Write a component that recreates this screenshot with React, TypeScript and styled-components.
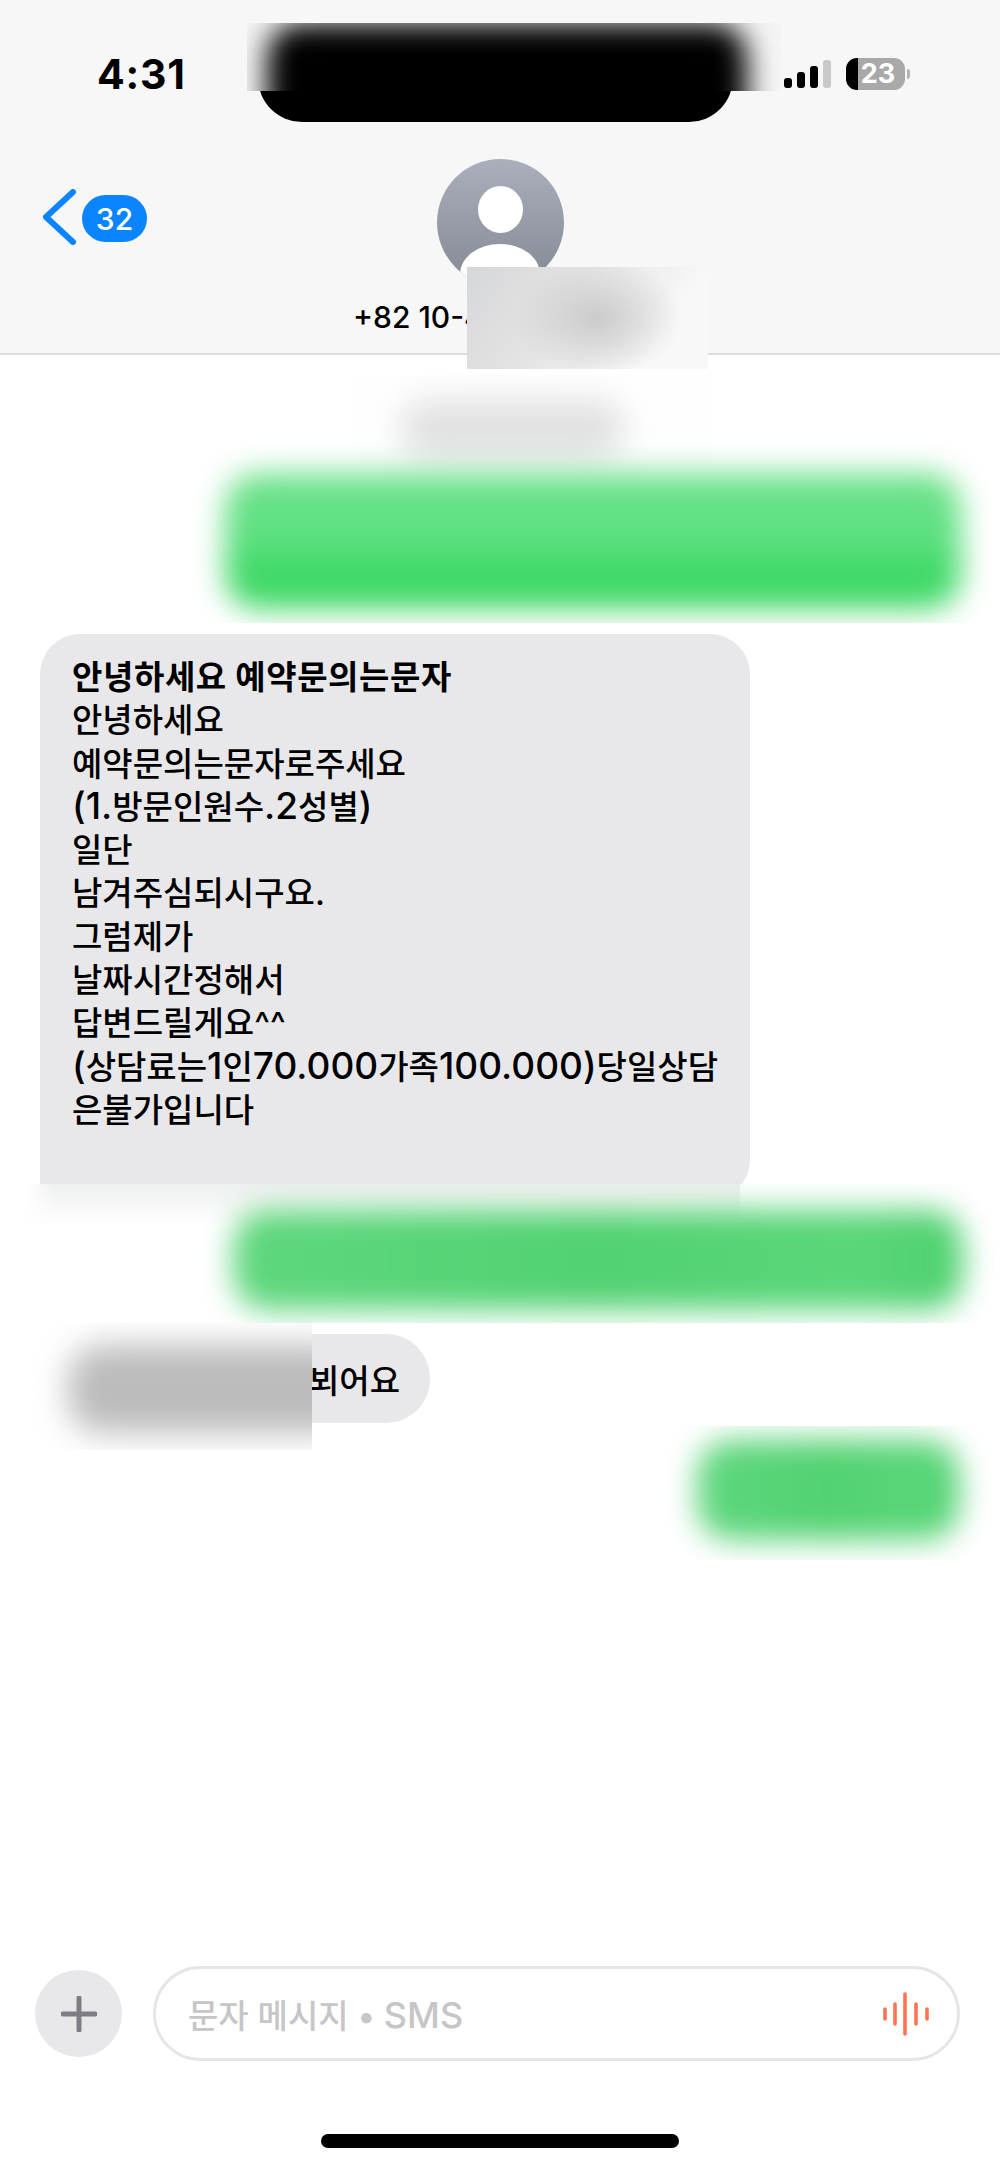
import React from 'react';
import styled, { createGlobalStyle } from 'styled-components';

const GlobalStyle = createGlobalStyle`
    html, body {
        margin: 0;
        padding: 0;
        background: #fff;
    }

    * {
        box-sizing: border-box;
    }
`;

const FONT = `Inter, 'Noto Sans CJK KR', sans-serif`;

const Page = styled.div`
    position: relative;
    display: flex;
    flex-direction: column;
    width: 1000px;
    height: 2168px;
    overflow: hidden;
    background: #fff;
    font-family: ${FONT};
    color: #000;
`;

const Header = styled.header`
    position: relative;
    display: flex;
    flex-direction: column;
    height: 355px;
    background: #f7f7f7;
    border-bottom: 2px solid #dcdcdc;
`;

const StatusBar = styled.div`
    display: flex;
    justify-content: space-between;
    align-items: flex-start;
    height: 159px;
    padding: 50px 95px 0 97px;
`;

const Time = styled.div`
    font-size: 41px;
    line-height: 48px;
    font-weight: 700;
    letter-spacing: 0.8px;
`;

const StatusIcons = styled.div`
    display: flex;
    align-items: flex-end;
    gap: 15px;
    padding-top: 8px;
`;

const Signal = styled.div`
    display: flex;
    align-items: flex-end;
    gap: 5px;
    padding-bottom: 2px;
`;

const SignalBar = styled.span<{ $height: number; $off?: boolean }>`
    width: 8px;
    height: ${(props) => props.$height}px;
    border-radius: 3px;
    background: ${(props) => (props.$off ? '#c9c9c9' : '#000')};
`;

const Battery = styled.div`
    position: relative;
    display: flex;
    justify-content: center;
    align-items: center;
    width: 59px;
    height: 32px;
    padding-left: 5px;
    border-radius: 11px;
    background: linear-gradient(to right, #000 12px, #a9a9a9 12px);
    color: #fff;
    font-size: 27px;
    font-weight: 700;
    line-height: 32px;

    &::after {
        content: '';
        position: absolute;
        left: 61px;
        top: 11px;
        width: 3px;
        height: 10px;
        border-radius: 0 5px 5px 0;
        background: #b4b4b4;
    }
`;

const Island = styled.div`
    position: absolute;
    left: 258px;
    top: 30px;
    width: 475px;
    height: 92px;
    border-radius: 44px;
    background: #000;
`;

const NavRow = styled.div`
    display: grid;
    grid-template-columns: 1fr auto 1fr;
    height: 127px;
`;

const BackLink = styled.div`
    display: flex;
    align-items: flex-start;
    gap: 5px;
    padding: 30px 0 0 42px;
`;

const Badge = styled.div`
    display: flex;
    justify-content: center;
    align-items: center;
    width: 65px;
    height: 47px;
    margin-top: 6px;
    border-radius: 24px;
    background: #0a84ff;
    color: #fff;
    font-size: 30px;
    font-weight: 500;
`;

const Avatar = styled.div`
    display: flex;
    flex-direction: column;
    align-items: center;
    width: 127px;
    height: 127px;
    padding-top: 27px;
    overflow: hidden;
    border-radius: 50%;
    background: linear-gradient(#abafbb, #858994);
`;

const AvatarHead = styled.div`
    flex: none;
    width: 45px;
    height: 47px;
    border-radius: 50%;
    background: #fff;
`;

const AvatarBody = styled.div`
    flex: none;
    width: 80px;
    height: 60px;
    margin-top: 11px;
    border-radius: 50%;
    background: #fff;
`;

const PhoneNumber = styled.div`
    padding: 11px 0 0 353px;
    font-size: 30px;
    line-height: 40px;
    font-weight: 500;
`;

const StatusCensor = styled.div`
    position: absolute;
    left: 247px;
    top: 23px;
    display: flex;
    width: 534px;
    height: 68px;
    overflow: hidden;
    background: #f4f4f4;
`;

const NameCensor = styled.div`
    position: absolute;
    left: 467px;
    top: 267px;
    width: 241px;
    height: 102px;
    background:
        radial-gradient(ellipse 85px 58px at 54% 50%, #cbcbcb, rgba(203, 203, 203, 0) 100%),
        linear-gradient(125deg, #d6d7d9 0%, #e4e4e4 40%, #f8f8f8 78%);
`;

const Blob = styled.div<{
    $left: number;
    $top: number;
    $width: number;
    $height: number;
    $fill: string;
    $blur?: number;
}>`
    flex: none;
    width: ${(props) => props.$width}px;
    height: ${(props) => props.$height}px;
    margin-left: ${(props) => props.$left}px;
    margin-top: ${(props) => props.$top}px;
    border-radius: 34px;
    background: ${(props) => props.$fill};
    filter: blur(${(props) => props.$blur ?? 15}px);
`;

const Thread = styled.main`
    flex: 1;
    display: flex;
    flex-direction: column;
`;

const Censored = styled.div<{
    $height: number;
    $pull?: number;
    $backdrop?: string;
    $inset?: number;
    $width?: number;
}>`
    position: relative;
    display: flex;
    align-items: flex-start;
    flex: none;
    width: ${(props) => (props.$width ? `${props.$width}px` : 'auto')};
    height: ${(props) => props.$height}px;
    margin-top: ${(props) => props.$pull ?? 0}px;
    margin-left: ${(props) => props.$inset ?? 0}px;
    overflow: hidden;
    background: ${(props) => props.$backdrop ?? 'transparent'};
`;

const Bubble = styled.div`
    flex: none;
    width: 710px;
    height: 566px;
    margin: 11px 0 -16px 40px;
    padding: 22px 20px 0 32px;
    border-radius: 40px 40px 40px 0;
    background: #e8e8ea;
    font-size: 33px;
    line-height: 43.3px;
    font-weight: 500;
`;

const BubbleTitle = styled.div`
    font-weight: 700;
    letter-spacing: 0.6px;
`;

const BubbleLine = styled.div`
    white-space: nowrap;
`;

const Latin = styled.span<{ $size: number }>`
    font-size: ${(props) => props.$size}px;
    line-height: 1;
`;

const ShortRow = styled.div`
    position: relative;
    flex: none;
    height: 89px;
    margin-top: 11px;
`;

const ShortBubble = styled.div`
    display: flex;
    justify-content: flex-end;
    align-items: center;
    width: 390px;
    height: 89px;
    margin-left: 40px;
    padding-right: 30px;
    border-radius: 44px;
    background: #e8e8ea;
    font-size: 33px;
    font-weight: 500;
`;

const ShortCensor = styled.div`
    position: absolute;
    left: 0;
    top: -11px;
    display: flex;
    width: 312px;
    height: 127px;
    overflow: hidden;
    background: #fff;
`;

const Composer = styled.footer`
    display: flex;
    flex-direction: column;
    align-items: stretch;
    gap: 73px;
    padding-bottom: 20px;
`;

const InputRow = styled.div`
    display: flex;
    align-items: center;
    gap: 31px;
    padding-left: 35px;
`;

const PlusButton = styled.div`
    display: flex;
    justify-content: center;
    align-items: center;
    width: 87px;
    height: 87px;
    border-radius: 50%;
    background: #e8e8ea;
`;

const InputBox = styled.div`
    display: flex;
    justify-content: space-between;
    align-items: center;
    width: 807px;
    height: 95px;
    padding: 0 28px 0 32px;
    border: 3px solid #e6e6e6;
    border-radius: 48px;
    color: #c6c6c8;
    font-size: 33px;
    font-weight: 500;
`;

const HomeBar = styled.div`
    align-self: center;
    width: 358px;
    height: 14px;
    border-radius: 7px;
    background: #000;
`;

const GREEN_TOP = 'linear-gradient(#6ce28b 0%, #60e082 45%, #3bd862 78%, #3fd966 100%)';
const GREEN_FLAT = 'linear-gradient(to right, #5fd77e 0%, #52d272 50%, #5ad679 85%, #4ed16f 100%)';
const num = (text: string) => <Latin $size={37}>{text}</Latin>;

const App: React.FC = () => {
    return (
        <Page>
            <GlobalStyle />
            <Header>
                <Island />
                <StatusBar>
                    <Time>4:31</Time>
                    <StatusIcons>
                        <Signal>
                            <SignalBar $height={10} />
                            <SignalBar $height={16} />
                            <SignalBar $height={22} />
                            <SignalBar $height={28} $off />
                        </Signal>
                        <Battery>23</Battery>
                    </StatusIcons>
                </StatusBar>
                <StatusCensor>
                    <Blob $left={20} $top={0} $width={480} $height={120} $fill="#000" $blur={14} />
                </StatusCensor>
                <NavRow>
                    <BackLink>
                        <svg width="35" height="56" viewBox="0 0 35 56" fill="none">
                            <path
                                d="M31 3 L4 28 L31 53"
                                stroke="#0a84ff"
                                strokeWidth="6"
                                strokeLinecap="round"
                                strokeLinejoin="round"
                            />
                        </svg>
                        <Badge>32</Badge>
                    </BackLink>
                    <Avatar>
                        <AvatarHead />
                        <AvatarBody />
                    </Avatar>
                    <div />
                </NavRow>
                <PhoneNumber>+82 10-4</PhoneNumber>
                <NameCensor />
            </Header>
            <Thread>
                <Censored $height={110} $pull={20} $backdrop="#fefefe" $inset={358} $width={355}>
                    <Blob $left={42} $top={24} $width={225} $height={62} $fill="#e2e2e2" />
                </Censored>
                <Censored $height={183} $pull={-45}>
                    <Blob $left={225} $top={33} $width={736} $height={136} $fill={GREEN_TOP} />
                </Censored>
                <Bubble>
                    <BubbleTitle>안녕하세요 예약문의는문자</BubbleTitle>
                    <BubbleLine>안녕하세요</BubbleLine>
                    <BubbleLine>예약문의는문자로주세요</BubbleLine>
                    <BubbleLine>
                        {num('(1.')}방문인원수{num('.2')}성별{num(')')}
                    </BubbleLine>
                    <BubbleLine>일단</BubbleLine>
                    <BubbleLine>남겨주심되시구요.</BubbleLine>
                    <BubbleLine>그럼제가</BubbleLine>
                    <BubbleLine>날짜시간정해서</BubbleLine>
                    <BubbleLine>답변드릴게요^^</BubbleLine>
                    <BubbleLine>
                        {num('(')}상담료는{num('1')}인{num('70.000')}가족{num('100.000)')}당일상담
                    </BubbleLine>
                    <BubbleLine>은불가입니다</BubbleLine>
                </Bubble>
                <Censored
                    $height={139}
                    $inset={25}
                    $backdrop="linear-gradient(to right, #fff, rgba(255,255,255,0) 30px) no-repeat, linear-gradient(#eef0ef, #fff 42px) 0 0 / 715px 100% no-repeat, #fff"
                >
                    <Blob $left={208} $top={26} $width={730} $height={100} $fill={GREEN_FLAT} />
                </Censored>
                <ShortRow>
                    <ShortBubble>뵈어요</ShortBubble>
                    <ShortCensor>
                        <Blob $left={68} $top={22} $width={300} $height={88} $fill="#bcbcbc" $blur={16} />
                    </ShortCensor>
                </ShortRow>
                <Censored $height={134} $pull={3}>
                    <Blob $left={697} $top={14} $width={262} $height={100} $fill={GREEN_FLAT} />
                </Censored>
            </Thread>
            <Composer>
                <InputRow>
                    <PlusButton>
                        <svg width="36" height="36" viewBox="0 0 36 36" fill="none">
                            <path
                                d="M18 2 V34 M2 18 H34"
                                stroke="#7d7e84"
                                strokeWidth="5"
                                strokeLinecap="round"
                            />
                        </svg>
                    </PlusButton>
                    <InputBox>
                        <span>
                            문자 메시지 • <Latin $size={36}>SMS</Latin>
                        </span>
                        <svg width="46" height="44" viewBox="0 0 46 44" fill="none">
                            <path
                                d="M2 17 V27 M12 12 V32 M22 2 V42 M33 12 V32 M44 17 V27"
                                stroke="#ff7350"
                                strokeWidth="3.6"
                                strokeLinecap="round"
                            />
                        </svg>
                    </InputBox>
                </InputRow>
                <HomeBar />
            </Composer>
        </Page>
    );
};

export default App;
